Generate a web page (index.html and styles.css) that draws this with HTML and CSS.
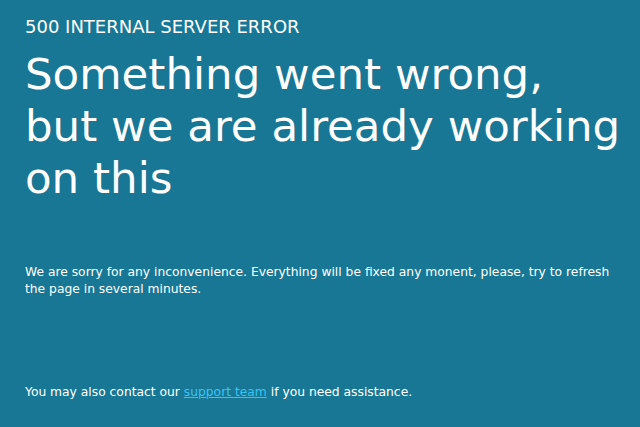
FILE: index.html
```html
<!DOCTYPE html>
<html lang="en">
<head>
  <meta charset="UTF-8" />
  <title>500 Internal Server Error</title>
  <link rel="stylesheet" href="styles.css">
</head>
<body>
  <div class="page">
    <h2 class="code">500 INTERNAL SERVER ERROR</h2>
    <h1 class="title">Something went wrong,<br>but we are already working on this</h1>
    <p class="sorry">We are sorry for any inconvenience. Everything will be fixed any monent, please, try to refresh the page in several minutes.</p>
    <p class="contact">You may also contact our <a href="#">support team</a> if you need assistance.</p>
  </div>
</body>
</html>
```

FILE: styles.css
```css
body {
  margin: 0;
  background: #187795;
  color: #fff;
  font-family: "DejaVu Sans", Verdana, sans-serif;
}

.page {
  padding: 14px 12px 0 25px;
}

.code {
  margin: 0;
  font-size: 18px;
  font-weight: normal;
  line-height: 26px;
}

.title {
  margin: 8px 0 0;
  font-size: 43.5px;
  font-weight: normal;
  line-height: 52px;
}

.sorry {
  margin: 60px 0 0;
  font-size: 12.3px;
  line-height: 17px;
}

.contact {
  margin: 86px 0 0;
  font-size: 12.3px;
  line-height: 17px;
}

.contact a {
  color: #38c3f2;
}
```
